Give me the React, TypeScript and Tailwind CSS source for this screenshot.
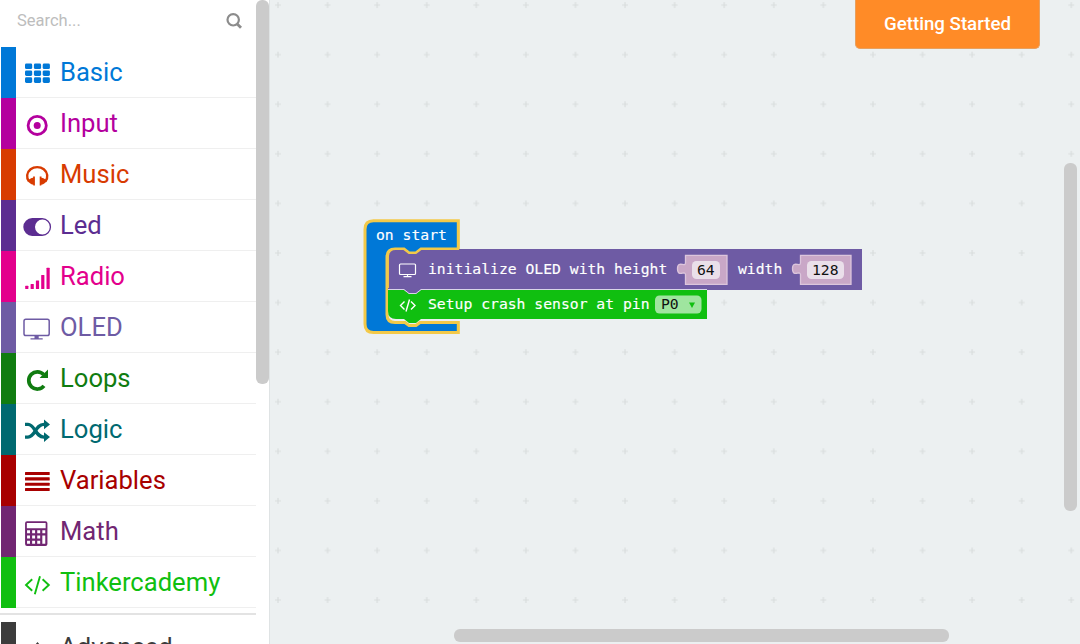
import React from "react";

type Item = { name: string; color: string; icon: React.ReactNode };

const categories: Item[] = [
  {
    name: "Basic",
    color: "#0078d7",
    icon: (
      <g>
        {[7.5, 14.4, 21.3].map((y) =>
          [1, 9.9, 18.7].map((x) => <rect key={`${x}-${y}`} x={x} y={y} width="7.2" height="5.6" rx="1.4" />)
        )}
      </g>
    ),
  },
  {
    name: "Input",
    color: "#b4009e",
    icon: (
      <g>
        <circle cx="13.2" cy="18.4" r="9.1" fill="none" stroke="currentColor" strokeWidth="2.8" />
        <circle cx="13.2" cy="18.4" r="3.5" />
      </g>
    ),
  },
  {
    name: "Music",
    color: "#d83b01",
    icon: (
      <g>
        <path d="M5 23.400C3.400 21.400 2.900 19.400 3.200 17.200C3.900 12.200 8.200 9.100 13.200 9.100S22.500 12.200 23.200 17.200C23.500 19.400 23 21.400 21.400 23.400" fill="none" stroke="currentColor" strokeWidth="2.400" />
        <path d="M10.900 18.600v9H9.300v-.9C6.700 26.400 4.800 24.800 4 22.800C5.300 20.900 7.100 19.900 9.100 19.700v-1.100zM15.700 18.600v9h1.600v-.9c2.600-.3 4.500-1.900 5.300-3.900c-1.300-1.900-3.100-2.900-5.100-3.100v-1.100z" />
      </g>
    ),
  },
  {
    name: "Led",
    color: "#5c2d91",
    icon: (
      <path fillRule="evenodd" d="M8.200 9.100h10a8.900 8.900 0 0 1 0 17.800h-10a8.900 8.900 0 0 1 0-17.800zM18.400 10.600a7.400 7.400 0 1 0 0 14.800a7.400 7.400 0 0 0 0-14.800z" />
    ),
  },
  {
    name: "Radio",
    color: "#e3008c",
    icon: (
      <g>
        <rect x="1.200" y="25.700" width="3.200" height="3.200" rx=".5" />
        <rect x="6.600" y="24" width="3.200" height="4.900" rx=".5" />
        <rect x="11.900" y="20.500" width="3.200" height="8.400" rx=".5" />
        <rect x="17.200" y="15" width="3.200" height="13.900" rx=".5" />
        <rect x="22.500" y="7.800" width="3.200" height="21.100" rx=".5" />
      </g>
    ),
  },
  {
    name: "OLED",
    color: "#6e5ba4",
    icon: (
      <g>
        <rect x="0" y="8.200" width="25.200" height="16.400" rx="1.800" fill="none" stroke="currentColor" strokeWidth="1.500" />
        <path d="M10.500 25h4.200v2.200h4v1.400H6.500v-1.400h4z" />
      </g>
    ),
  },
  {
    name: "Loops",
    color: "#107c10",
    icon: (
      <g>
        <path d="M19.700 12.600A8.600 8.600 0 1 0 20 23.900" fill="none" stroke="currentColor" strokeWidth="3.700" />
        <path d="M24 7.500v8.400h-8.400z" />
      </g>
    ),
  },
  {
    name: "Logic",
    color: "#006970",
    icon: (
      <g>
        <path d="M1 11.400h3c7 0 7.300 12.700 16 12.700M1 24.100h3c7.400 0 7.200-12.700 16-12.700" fill="none" stroke="currentColor" strokeWidth="3.400" />
        <path d="M20 6.600l6 4.800l-6 4.800zM20 19.300l6 4.800l-6 4.800z" />
      </g>
    ),
  },
  {
    name: "Variables",
    color: "#a80000",
    icon: (
      <g>
        {[7.9, 13.3, 18.7, 24].map((y) => (
          <rect key={y} x="1" y={y} width="24.700" height="3.100" rx=".5" />
        ))}
      </g>
    ),
  },
  {
    name: "Math",
    color: "#712672",
    icon: (
      <path
        transform="translate(0.100 -1.300) scale(0.980 1)"
        fillRule="evenodd"
        d="M3 7.500h18.800q2 0 2 2v20.700q0 2-2 2H3q-2 0-2-2V9.500q0-2 2-2zM2.800 9.300v5.300h19.200V9.300zM3 16.600v3h3v-3zM8.200 16.600v3h3v-3zM13.400 16.600v3h3v-3zM18.600 16.600v3h3v-3zM3 21.800v3h3v-3zM8.200 21.800v3h3v-3zM13.400 21.800v3h3v-3zM3 27v3h3v-3zM8.200 27v3h3v-3zM13.400 27v3h3v-3zM18.600 21.800v8.200h3v-8.200z"
      />
    ),
  },
  {
    name: "Tinkercademy",
    color: "#10bf10",
    icon: (
      <path d="M8.200 13.200L2 19l6.200 5.800M18.600 13.200l6.200 5.800l-6.200 5.800M16 10.300L10.800 28.200" fill="none" stroke="currentColor" strokeWidth="1.900" />
    ),
  },
];

function CategoryRow({ item }: { item: Item }) {
  return (
    <div className="flex h-[51px] shrink-0" style={{ color: item.color }}>
      <div className="ml-px w-[15px] shrink-0" style={{ backgroundColor: item.color }} />
      <div className="flex grow border-b border-[#efefef] pl-2">
        <svg className="h-[36px] w-[30px] shrink-0 overflow-visible" viewBox="0 0 30 36" fill="currentColor">
          <g transform="translate(0 9)">{item.icon}</g>
        </svg>
        <span className="pl-[6px] text-[25.6px] leading-[50px]">{item.name}</span>
      </div>
    </div>
  );
}

function Sidebar() {
  return (
    <aside className="flex h-full w-[270px] shrink-0 border-r border-[#dfe3e4] bg-white">
      <div className="flex w-[256px] shrink-0 flex-col overflow-hidden">
        <div className="flex h-[47px] shrink-0 items-start justify-between pl-[17px] pr-[13px] pt-[11px]">
          <span className="text-[16.5px] leading-[20px] text-[#bdbdbd]">Search...</span>
          <svg className="mt-px h-[18px] w-[18px]" viewBox="0 0 18 18" fill="none" stroke="#8c8c8c">
            <circle cx="8.2" cy="7.800" r="5.700" strokeWidth="2.200" />
            <path d="M12.200 12l3.800 3.800" strokeWidth="2.800" />
          </svg>
        </div>
        {categories.map((item) => (
          <CategoryRow key={item.name} item={item} />
        ))}
        <div className="mt-[5px] h-[2px] shrink-0 bg-[#e3e3e3]" />
        <div className="mt-[7px] flex h-[51px] shrink-0 text-[#3c3c3c]">
          <div className="ml-px w-[15px] shrink-0 bg-[#3c3c3c]" />
          <svg className="ml-2 h-[36px] w-[30px] shrink-0" viewBox="0 0 30 36" fill="none" stroke="currentColor" strokeWidth="2.500">
            <path d="M6.500 30l7-8l7 8" />
          </svg>
          <span className="pl-[6px] text-[25.6px] leading-[50px]">Advanced</span>
        </div>
      </div>
      <div className="h-[384px] w-[13px] rounded-[6px] bg-[#cbcbcb]" />
    </aside>
  );
}

function Blocks() {
  return (
    <svg
      className="absolute inset-0 h-[644px] w-[810px] font-['DejaVu_Sans_Mono',monospace] text-[14.73px]"
      viewBox="270 0 810 644"
    >
      <defs>
        <pattern id="grid" x="253.200" y="-19.700" width="49.580" height="49.580" patternUnits="userSpaceOnUse">
          <path d="M24.800 21.800v6M21.800 24.800h6" stroke="#d9dddd" strokeWidth="1.200" />
        </pattern>
      </defs>
      <rect x="270" width="810" height="644" fill="url(#grid)" />
      <path
        d="M458.300 220.800H373.500q-8.500 0-8.500 8.500V324q0 8.500 8.500 8.500H458.300V322.500H420l-4 3h-7l-4-3H395q-8 0-8-8V257q0-8 8-8H404l5 4h7l5-4H458.300z"
        fill="#0078d7"
        stroke="#f3c949"
        strokeWidth="3"
      />
      <path d="M862 249H421l-5 4h-7l-5-4H396q-8 0-8 8V290H404l5 4h7l5-4H862z" fill="#6e5ba4" />
      <path d="M388 290H404l5 4h7l5-4H707V319H421l-5 4h-7l-5-4H396q-8 0-8-8z" fill="#10bf10" />
      <path d="M388 289.500H404l5 4h7l5-4H707" fill="none" stroke="#d9d5e8" strokeWidth="1" />
      <path d="M388.200 288V257q0-7.700 7.700-7.700h8l5 4h7l5-4H459" fill="none" stroke="#f3c949" strokeWidth="1.500" />
      <g fill="none" stroke="#fff" strokeWidth="1.200">
        <rect x="399.500" y="264" width="16" height="10.500" rx="1" />
        <path d="M407.500 274.500v2M403.500 276.600h8" />
        <path d="M404.500 301.500l-4 4l4 4M411 301.500l4 4l-4 4M409.500 299.500l-3.500 12" strokeWidth="1.400" />
      </g>
      {[
        { x: 685.500, w: 41.500, inner: 28, t: "64", tx: 697 },
        { x: 800.500, w: 50.500, inner: 37, t: "128", tx: 812 },
      ].map((n) => (
        <g key={n.t}>
          <path
            d={`M${n.x} 255.300h${n.w}v29h-${n.w}v-9.500c0-5-8 3-8-6s8-1 8-6z`}
            fill="#c9a7c7"
            stroke="#dcc5dc"
            strokeWidth="1.300"
          />
          <rect x={n.x + 6.500} y="261" width={n.inner} height="18" rx="4.500" fill="#eadfea" />
          <text x={n.tx} y="275" fill="#111">{n.t}</text>
        </g>
      ))}
      <g fill="#fff" stroke="#fff" strokeWidth=".15">
        <text x="376" y="239.500">on start</text>
        <text x="428" y="273.500">initialize OLED with height</text>
        <text x="738" y="273.500">width</text>
        <text x="428" y="309">Setup crash sensor at pin</text>
      </g>
      <rect x="655" y="295.500" width="46.500" height="18" rx="4.500" fill="#9fe59f" />
      <text x="661" y="309" fill="#111">P0</text>
      <path d="M689 302.500h6l-3 5.500z" fill="#10bf10" />
    </svg>
  );
}

export default function App() {
  return (
    <div className="flex h-[644px] w-[1080px] overflow-hidden bg-[#ecf0f1] font-['Roboto',sans-serif]">
      <Sidebar />
      <main className="relative flex grow flex-col">
        <Blocks />
        <button className="relative mr-[40px] h-[49px] w-[185px] shrink-0 self-end rounded-b-[5px] border border-t-0 border-[#e7a05f] bg-[#ff8b27] text-[18.7px] font-medium text-white">
          Getting Started
        </button>
        <div className="relative mr-[3px] mt-[114px] h-[348px] w-[13px] shrink-0 self-end rounded-[6px] bg-[#cbcbcb]" />
        <div className="relative mb-[2px] ml-[184px] mt-auto h-[13px] w-[495px] shrink-0 rounded-[6px] bg-[#cbcbcb]" />
      </main>
    </div>
  );
}
